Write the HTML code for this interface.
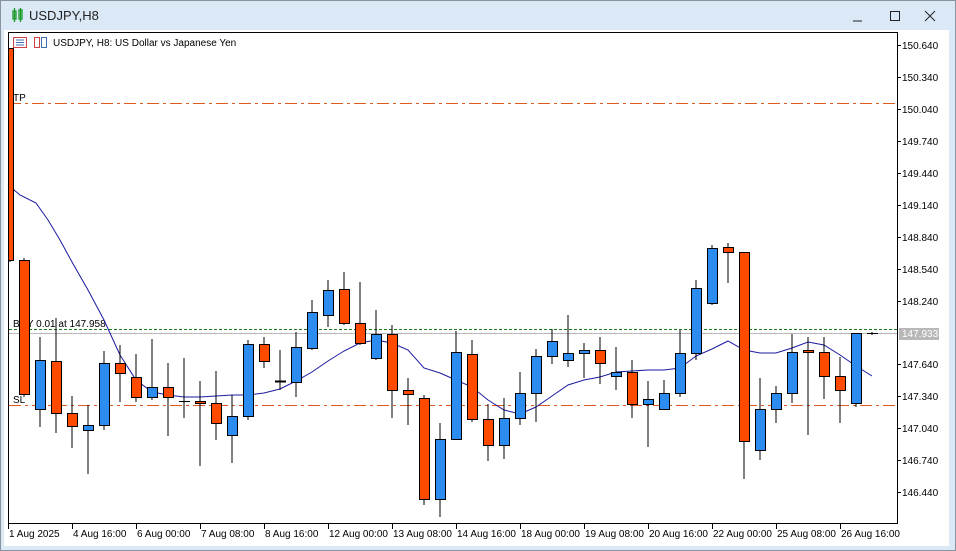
<!DOCTYPE html>
<html><head><meta charset="utf-8"><style>
html,body{margin:0;padding:0;width:956px;height:551px;overflow:hidden;background:#dbe8f5;font-family:"Liberation Sans",sans-serif}
</style></head><body>
<svg width="956" height="551" xmlns="http://www.w3.org/2000/svg" style="position:absolute;left:0;top:0" font-family="Liberation Sans, sans-serif">
<rect x="0" y="0" width="956" height="551" fill="#dbe8f5"/>
<rect x="0.5" y="0.5" width="955" height="550" fill="none" stroke="#8a949e"/>
<!-- title icon -->
<g stroke="#1a9b2a" fill="none" stroke-width="1.3"><rect x="13" y="11" width="3" height="8"/><line x1="14.5" y1="8" x2="14.5" y2="22"/><rect x="19" y="10" width="3" height="9"/><line x1="20.5" y1="8" x2="20.5" y2="22"/></g>
<text x="29" y="20" font-size="13" fill="#222">USDJPY,H8</text>
<line x1="853" y1="21" x2="862" y2="21" stroke="#222"/>
<rect x="890.5" y="11.5" width="9" height="9" fill="none" stroke="#222"/>
<path d="M925 11 L935 21 M935 11 L925 21" stroke="#222"/>
<rect x="4" y="30" width="945" height="516" fill="#fff"/>
<rect x="8.5" y="32.5" width="889" height="491" fill="#fff" stroke="#000"/>
<!-- header icons -->
<rect x="13.5" y="37.5" width="13" height="10" fill="none" stroke="#d04040"/>
<path d="M16 40h8M16 42.5h8M16 45h8" stroke="#3c6fb0"/>
<rect x="34.5" y="37.5" width="5" height="10" fill="none" stroke="#d04040"/><rect x="41.5" y="37.5" width="5" height="10" fill="none" stroke="#3c6fb0"/>
<text x="53" y="46" font-size="10" fill="#000">USDJPY, H8:  US Dollar vs Japanese Yen</text>
<!-- lines -->
<line x1="9" y1="103.5" x2="897" y2="103.5" stroke="#e05a20" stroke-dasharray="12,4,3,4"/>
<text x="13" y="101" font-size="10" fill="#000">TP</text>
<line x1="9" y1="405.5" x2="897" y2="405.5" stroke="#e05a20" stroke-dasharray="12,4,3,4"/>
<text x="13" y="403" font-size="10" fill="#000">SL</text>
<line x1="9" y1="329.5" x2="897" y2="329.5" stroke="#1a7a1a" stroke-dasharray="3,2"/>
<text x="13" y="327" font-size="10" fill="#000">BUY 0.01 at 147.958</text>
<line x1="9" y1="333.5" x2="897" y2="333.5" stroke="#b8b8b8"/>
<!-- MA -->
<polyline fill="none" stroke="#1a1aa0" stroke-width="1" points="8,185 20,195 36,203 48,220 60,240 72,262 88,290 104,320 120,355 136,380 152,392 168,395 184,397 200,397 216,396 232,395 248,395 264,393 280,389 296,381 312,372 328,361 344,351 360,343 376,340 392,343 408,350 424,368 440,373 456,380 472,387 488,400 504,410 520,414 536,407 552,396 568,385 584,380 600,377 616,372 632,371 648,370 664,370 680,368 696,356 712,349 728,341 744,350 760,353 776,353 792,348 808,342 824,345 840,355 856,366 872,376"/>
<!-- candles -->
<g stroke="#000" stroke-width="1">
<line x1="10" y1="48" x2="10" y2="262"/><rect x="8.5" y="48.5" width="5" height="212" fill="#ff4a00"/>
<line x1="24" y1="258" x2="24" y2="397"/><rect x="19.5" y="260.5" width="10" height="134" fill="#ff4a00"/>
<line x1="40" y1="337" x2="40" y2="427"/><rect x="35.5" y="360.5" width="10" height="49" fill="#2d8cf0"/>
<line x1="56" y1="318" x2="56" y2="433"/><rect x="51.5" y="361.5" width="10" height="52" fill="#ff4a00"/>
<line x1="72" y1="396" x2="72" y2="448"/><rect x="67.5" y="413.5" width="10" height="13" fill="#ff4a00"/>
<line x1="88" y1="405" x2="88" y2="474"/><rect x="83.5" y="425.5" width="10" height="5" fill="#2d8cf0"/>
<line x1="104" y1="351" x2="104" y2="430"/><rect x="99.5" y="363.5" width="10" height="62" fill="#2d8cf0"/>
<line x1="120" y1="345" x2="120" y2="402"/><rect x="115.5" y="363.5" width="10" height="10" fill="#ff4a00"/>
<line x1="136" y1="354" x2="136" y2="402"/><rect x="131.5" y="377.5" width="10" height="20" fill="#ff4a00"/>
<line x1="152" y1="339" x2="152" y2="400"/><rect x="147.5" y="387.5" width="10" height="10" fill="#2d8cf0"/>
<line x1="168" y1="363" x2="168" y2="436"/><rect x="163.5" y="387.5" width="10" height="10" fill="#ff4a00"/>
<line x1="184" y1="358" x2="184" y2="418"/><line x1="179" y1="401.5" x2="190" y2="401.5"/>
<line x1="200" y1="381" x2="200" y2="466"/><rect x="195.5" y="401.5" width="10" height="2" fill="#ff4a00"/>
<line x1="216" y1="371" x2="216" y2="440"/><rect x="211.5" y="403.5" width="10" height="20" fill="#ff4a00"/>
<line x1="232" y1="395" x2="232" y2="463"/><rect x="227.5" y="416.5" width="10" height="19" fill="#2d8cf0"/>
<line x1="248" y1="340" x2="248" y2="420"/><rect x="243.5" y="344.5" width="10" height="72" fill="#2d8cf0"/>
<line x1="264" y1="337" x2="264" y2="368"/><rect x="259.5" y="344.5" width="10" height="17" fill="#ff4a00"/>
<line x1="280" y1="350" x2="280" y2="390"/><line x1="275" y1="381.5" x2="286" y2="381.5" stroke-width="2"/>
<line x1="296" y1="332" x2="296" y2="397"/><rect x="291.5" y="347.5" width="10" height="35" fill="#2d8cf0"/>
<line x1="312" y1="300" x2="312" y2="350"/><rect x="307.5" y="312.5" width="10" height="36" fill="#2d8cf0"/>
<line x1="328" y1="280" x2="328" y2="327"/><rect x="323.5" y="290.5" width="10" height="25" fill="#2d8cf0"/>
<line x1="344" y1="272" x2="344" y2="325"/><rect x="339.5" y="289.5" width="10" height="34" fill="#ff4a00"/>
<line x1="360" y1="282" x2="360" y2="345"/><rect x="355.5" y="323.5" width="10" height="20" fill="#ff4a00"/>
<line x1="376" y1="310" x2="376" y2="360"/><rect x="371.5" y="334.5" width="10" height="24" fill="#2d8cf0"/>
<line x1="392" y1="325" x2="392" y2="418"/><rect x="387.5" y="334.5" width="10" height="56" fill="#ff4a00"/>
<line x1="408" y1="378" x2="408" y2="425"/><rect x="403.5" y="390.5" width="10" height="4" fill="#ff4a00"/>
<line x1="424" y1="395" x2="424" y2="505"/><rect x="419.5" y="398.5" width="10" height="101" fill="#ff4a00"/>
<line x1="440" y1="423" x2="440" y2="517"/><rect x="435.5" y="439.5" width="10" height="60" fill="#2d8cf0"/>
<line x1="456" y1="331" x2="456" y2="440"/><rect x="451.5" y="352.5" width="10" height="87" fill="#2d8cf0"/>
<line x1="472" y1="340" x2="472" y2="422"/><rect x="467.5" y="354.5" width="10" height="65" fill="#ff4a00"/>
<line x1="488" y1="404" x2="488" y2="461"/><rect x="483.5" y="419.5" width="10" height="26" fill="#ff4a00"/>
<line x1="504" y1="398" x2="504" y2="459"/><rect x="499.5" y="418.5" width="10" height="27" fill="#2d8cf0"/>
<line x1="520" y1="372" x2="520" y2="425"/><rect x="515.5" y="393.5" width="10" height="25" fill="#2d8cf0"/>
<line x1="536" y1="349" x2="536" y2="422"/><rect x="531.5" y="356.5" width="10" height="37" fill="#2d8cf0"/>
<line x1="552" y1="329" x2="552" y2="364"/><rect x="547.5" y="341.5" width="10" height="15" fill="#2d8cf0"/>
<line x1="568" y1="315" x2="568" y2="367"/><rect x="563.5" y="353.5" width="10" height="7" fill="#2d8cf0"/>
<line x1="584" y1="343" x2="584" y2="378"/><rect x="579.5" y="350.5" width="10" height="3" fill="#2d8cf0"/>
<line x1="600" y1="337" x2="600" y2="384"/><rect x="595.5" y="350.5" width="10" height="13" fill="#ff4a00"/>
<line x1="616" y1="347" x2="616" y2="390"/><rect x="611.5" y="372.5" width="10" height="4" fill="#2d8cf0"/>
<line x1="632" y1="360" x2="632" y2="418"/><rect x="627.5" y="372.5" width="10" height="32" fill="#ff4a00"/>
<line x1="648" y1="381" x2="648" y2="447"/><rect x="643.5" y="399.5" width="10" height="5" fill="#2d8cf0"/>
<line x1="664" y1="380" x2="664" y2="410"/><rect x="659.5" y="393.5" width="10" height="16" fill="#2d8cf0"/>
<line x1="680" y1="330" x2="680" y2="397"/><rect x="675.5" y="353.5" width="10" height="40" fill="#2d8cf0"/>
<line x1="696" y1="280" x2="696" y2="360"/><rect x="691.5" y="288.5" width="10" height="65" fill="#2d8cf0"/>
<line x1="712" y1="245" x2="712" y2="305"/><rect x="707.5" y="248.5" width="10" height="55" fill="#2d8cf0"/>
<line x1="728" y1="243" x2="728" y2="283"/><rect x="723.5" y="247.5" width="10" height="5" fill="#ff4a00"/>
<line x1="744" y1="252" x2="744" y2="479"/><rect x="739.5" y="252.5" width="10" height="189" fill="#ff4a00"/>
<line x1="760" y1="378" x2="760" y2="460"/><rect x="755.5" y="409.5" width="10" height="41" fill="#2d8cf0"/>
<line x1="776" y1="386" x2="776" y2="423"/><rect x="771.5" y="393.5" width="10" height="16" fill="#2d8cf0"/>
<line x1="792" y1="334" x2="792" y2="403"/><rect x="787.5" y="352.5" width="10" height="41" fill="#2d8cf0"/>
<line x1="808" y1="337" x2="808" y2="435"/><rect x="803.5" y="350.5" width="10" height="2" fill="#ff4a00"/>
<line x1="824" y1="337" x2="824" y2="399"/><rect x="819.5" y="352.5" width="10" height="24" fill="#ff4a00"/>
<line x1="840" y1="357" x2="840" y2="423"/><rect x="835.5" y="376.5" width="10" height="14" fill="#ff4a00"/>
<line x1="856" y1="333" x2="856" y2="407"/><rect x="851.5" y="333.5" width="10" height="70" fill="#2d8cf0"/>
<line x1="867" y1="333.5" x2="878" y2="333.5"/><line x1="872" y1="332" x2="872" y2="335"/>
</g>
<!-- price axis -->
<g font-size="10" fill="#000">
<rect x="899" y="328" width="40" height="12" fill="#b8b8b8"/>
<text x="902" y="337" fill="#fff">147.933</text>
<g stroke="#000"><path d="M897 45.5h4M897 77.5h4M897 109.5h4M897 141.5h4M897 173.5h4M897 205.5h4M897 237.5h4M897 269.5h4M897 301.5h4M897 364.5h4M897 396.5h4M897 428.5h4M897 460.5h4M897 492.5h4"/></g>
<text x="902" y="49">150.640</text><text x="902" y="81">150.340</text><text x="902" y="113">150.040</text>
<text x="902" y="145">149.740</text><text x="902" y="177">149.440</text><text x="902" y="209">149.140</text>
<text x="902" y="241">148.840</text><text x="902" y="273">148.540</text><text x="902" y="305">148.240</text>
<text x="902" y="368">147.640</text><text x="902" y="400">147.340</text><text x="902" y="432">147.040</text>
<text x="902" y="464">146.740</text><text x="902" y="496">146.440</text>
</g>
<!-- time axis -->
<g font-size="10" fill="#000">
<g stroke="#000"><path d="M8.5 524v5M72.5 524v5M136.5 524v5M200.5 524v5M264.5 524v5M328.5 524v5M392.5 524v5M456.5 524v5M520.5 524v5M584.5 524v5M648.5 524v5M712.5 524v5M776.5 524v5M840.5 524v5"/></g>
<text x="9" y="537">1 Aug 2025</text><text x="73" y="537">4 Aug 16:00</text><text x="137" y="537">6 Aug 00:00</text>
<text x="201" y="537">7 Aug 08:00</text><text x="265" y="537">8 Aug 16:00</text><text x="329" y="537">12 Aug 00:00</text>
<text x="393" y="537">13 Aug 08:00</text><text x="457" y="537">14 Aug 16:00</text><text x="521" y="537">18 Aug 00:00</text>
<text x="585" y="537">19 Aug 08:00</text><text x="649" y="537">20 Aug 16:00</text><text x="713" y="537">22 Aug 00:00</text>
<text x="777" y="537">25 Aug 08:00</text><text x="841" y="537">26 Aug 16:00</text>
</g>
</svg>
</body></html>
